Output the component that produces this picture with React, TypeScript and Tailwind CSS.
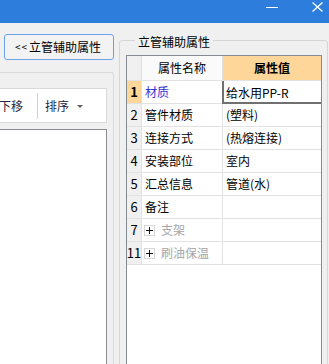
import React from 'react';

type Row = { n: string; name: string; value?: string; group?: boolean; active?: boolean };

const rows: Row[] = [
  { n: '1', name: '材质', value: '给水用PP-R', active: true },
  { n: '2', name: '管件材质', value: '(塑料)' },
  { n: '3', name: '连接方式', value: '(热熔连接)' },
  { n: '4', name: '安装部位', value: '室内' },
  { n: '5', name: '汇总信息', value: '管道(水)' },
  { n: '6', name: '备注' },
  { n: '7', name: '支架', group: true },
  { n: '11', name: '刷油保温', group: true },
];

const PropRow = ({ row }: { row: Row }) => (
  <div className="flex h-[23px] border-b border-[#e2e2e2]">
    <div
      className={`w-[15px] shrink-0 border-r border-[#e2e2e2] flex items-center justify-center text-[13px] ${
        row.active ? 'bg-[#ffd699] font-bold' : 'bg-[#f0f0f0]'
      }`}
    >
      {row.n}
    </div>
    <div className="w-[81px] shrink-0 border-r border-[#e2e2e2] flex items-center pl-[2px]">
      {row.group ? (
        <>
          <span className="w-[11px] h-[11px] border border-[#d6d6d6] bg-white flex items-center justify-center mr-[6px]">
            <svg width="7" height="7" viewBox="0 0 7 7">
              <path d="M0 3.5 H7 M3.5 0 V7" stroke="#111111" strokeWidth="1" />
            </svg>
          </span>
          <span className="text-[#a6a6a6]">{row.name}</span>
        </>
      ) : (
        <span className={`pl-[1px] ${row.active ? 'text-[#3434d4]' : 'text-black'}`}>{row.name}</span>
      )}
    </div>
    <div
      className={`flex-1 flex items-center pl-[3px] ${
        row.active ? 'shadow-[inset_2px_0_0_#707070,inset_0_-2px_0_#707070] -ml-[1px] pl-[4px] -mb-[1px]' : ''
      }`}
    >
      {row.value}
    </div>
  </div>
);

export default function App() {
  return (
    <div className="w-[329px] h-[364px] overflow-hidden bg-[#f0f0f0] flex flex-col text-[12px] leading-[16px] text-black font-['Noto_Sans_CJK_SC',sans-serif]">
      {/* title bar */}
      <div className="h-[23px] shrink-0 bg-[#2c7ddc] flex items-start justify-end">
        <svg width="12" height="3" viewBox="0 0 12 3" className="mt-[6px] mr-[34px]">
          <rect x="0" y="1" width="12" height="1" fill="#ffffff" />
        </svg>
        <svg width="11" height="10" viewBox="0 0 11 10" className="mt-[2px] mr-[6px]">
          <path d="M0.5 0.5 L10.5 9.5 M10.5 0.5 L0.5 9.5" stroke="#ffffff" strokeWidth="1.3" />
        </svg>
      </div>

      <div className="flex flex-1 min-h-0">
        {/* left column */}
        <div className="w-[114px] shrink-0 flex flex-col">
          <button className="mt-[11px] ml-[4px] w-[110px] h-[26px] border border-[#68a3e8] rounded-[3px] bg-[#f3f3f3] flex items-center pl-[10px] text-[12px]">
            <span className="text-[10px] tracking-[1px] mr-[1px]">&lt;&lt;</span>
            <span>立管辅助属性</span>
          </button>
          <div className="mt-[12px] w-[114px] flex-1 border-t border-r border-[#dadada] rounded-tr-[3px] flex flex-col pt-[15px]">
            <div className="w-[107px] h-[35px] bg-white border border-l-0 border-[#dadada] flex items-center text-[#262640]">
              <span className="-ml-[1px]">下移</span>
              <span className="ml-[14px] w-px h-[26px] bg-[#d0d0d0]" />
              <span className="ml-[7px]">排序</span>
              <svg width="6" height="3" viewBox="0 0 6 3" className="ml-[8px] mt-[1px]">
                <path d="M0 0 L6 0 L3 3 Z" fill="#606060" />
              </svg>
            </div>
            <div className="mt-[6px] w-[107px] flex-1 bg-white border-t border-r border-[#8b8b93]" />
          </div>
        </div>

        {/* right column */}
        <fieldset className="ml-[5px] mt-[8px] w-[209px] h-[400px] border border-[#d6d6d6] rounded-[3px] pl-[6px] pr-[5px] flex flex-col">
          <legend className="ml-[9px] px-[3px] pt-[3px]">立管辅助属性</legend>
          <div className="mt-[5px] w-[196px] flex-1 bg-white border-l border-r border-t border-[#868a92]">
            <div className="flex h-[25px] border-b border-[#e2e2e2]">
              <div className="w-[15px] shrink-0 bg-[#f0f0f0] border-r border-[#e2e2e2]" />
              <div className="w-[81px] shrink-0 bg-[#fafafa] border-r border-[#e2e2e2] flex items-center justify-center">
                属性名称
              </div>
              <div className="flex-1 bg-[#ffd699] flex items-center justify-center font-bold">属性值</div>
            </div>
            {rows.map((r) => (
              <PropRow key={r.n} row={r} />
            ))}
          </div>
        </fieldset>
      </div>
    </div>
  );
}
